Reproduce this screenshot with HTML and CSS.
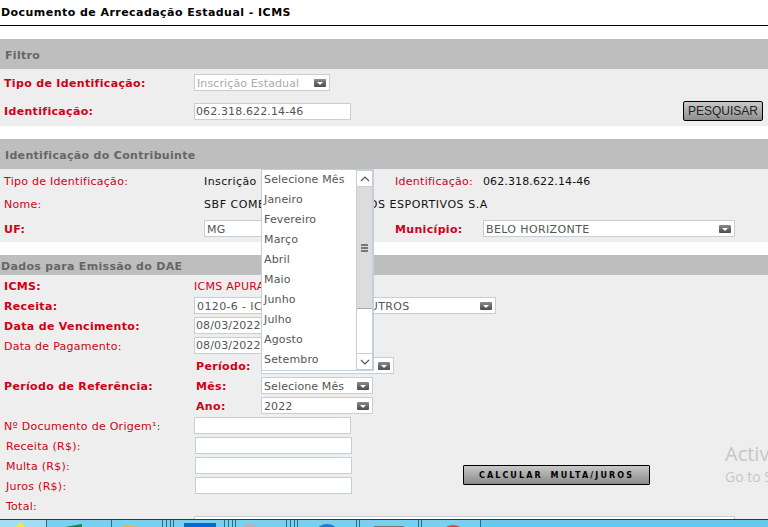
FILE: index.html
```html
<!DOCTYPE html>
<html lang="pt-BR">
<head>
  <meta charset="UTF-8" />
  <title>Documento de Arrecadação Estadual - ICMS</title>
  <link rel="stylesheet" href="styles.css">
</head>
<body>
  <div class="page">
    <h1 class="title">Documento de Arrecadação Estadual - ICMS</h1>

    <div class="section filtro">
      <h2 class="bar">Filtro</h2>
      <div class="panel">
        <div class="row row-tipo">
          <label class="lbl strong">Tipo de Identificação:</label>
          <div class="select select-off w136">Inscrição Estadual<span class="arrow"></span></div>
        </div>
        <div class="row row-id">
          <label class="lbl strong">Identificação:</label>
          <div class="input w157">062.318.622.14-46</div>
          <button class="btn-search">PESQUISAR</button>
        </div>
      </div>
    </div>

    <div class="section contrib">
      <h2 class="bar">Identificação do Contribuinte</h2>
      <div class="panel">
        <div class="row row-c1">
          <span class="lbl">Tipo de Identificação:</span>
          <span class="val col-val wide">Inscrição Estadual</span>
          <span class="lbl col-id">Identificação:</span>
          <span class="val">062.318.622.14-46</span>
        </div>
        <div class="row row-c2">
          <span class="lbl">Nome:</span>
          <span class="val col-val name">SBF COMERCIO DE PRODUTOS ESPORTIVOS S.A</span>
        </div>
        <div class="row row-c3">
          <span class="lbl strong">UF:</span>
          <div class="select upper w130 uf">MG<span class="arrow"></span></div>
          <span class="lbl strong col-mun">Município:</span>
          <div class="select upper w252">BELO HORIZONTE<span class="arrow"></span></div>
        </div>
      </div>
    </div>

    <div class="section dados">
      <h2 class="bar bar-short">Dados para Emissão do DAE</h2>
      <div class="panel panel-dados">
        <div class="line"><span class="lbl strong">ICMS:</span><span class="lbl">ICMS APURADO</span></div>
        <div class="line"><span class="lbl strong">Receita:</span><div class="select upper w302">0120-6 - ICMS COMERCIO E OUTROS<span class="arrow"></span></div></div>
        <div class="line"><span class="lbl strong">Data de Vencimento:</span><div class="input w157">08/03/2022</div></div>
        <div class="line"><span class="lbl">Data de Pagamento:</span><div class="input w157">08/03/2022</div></div>
        <div class="line line-ref"><span></span><span class="lbl strong">Período:</span><div class="select w133">Selecione<span class="arrow"></span></div></div>
        <div class="line line-ref"><span class="lbl strong">Período de Referência:</span><span class="lbl strong">Mês:</span><div class="select w112">Selecione Mês<span class="arrow"></span></div></div>
        <div class="line line-ref"><span></span><span class="lbl strong">Ano:</span><div class="select w112">2022<span class="arrow"></span></div></div>
        <div class="line"><span class="lbl">Nº Documento de Origem¹:</span><div class="input w157"></div></div>
        <div class="line line-money"><span class="lbl">Receita (R$):</span><div class="input w157"></div></div>
        <div class="line line-money"><span class="lbl">Multa (R$):</span><div class="input w157"></div><button class="btn-calc">CALCULAR MULTA/JUROS</button></div>
        <div class="line line-money"><span class="lbl">Juros (R$):</span><div class="input w157"></div></div>
        <div class="line line-money"><span class="lbl">Total:</span></div>
        <div class="line line-last"><span></span><div class="input w541"></div></div>
      </div>
    </div>

    <div class="taskbar">
      <div class="task w47 task-first"><span class="tip tip-star"></span></div>
      <div class="task w65"><span class="tip tip-green"></span></div>
      <div class="task w51"><span class="tip tip-gold"></span></div>
      <div class="task w4"></div><div class="task w4"></div><div class="task w3"></div>
      <div class="task w51"><span class="tip tip-blue"></span></div>
      <div class="task w4"></div><div class="task w4"></div><div class="task w3"></div>
      <div class="task w51"><span class="tip tip-gray"></span></div>
      <div class="task w4"></div><div class="task w4"></div><div class="task w3"></div>
      <div class="task w59"><span class="tip tip-round"></span></div>
      <div class="task w3"></div>
      <div class="task w59"><span class="tip tip-dark"></span></div>
      <div class="task w3"></div>
      <div class="task w59"><span class="tip tip-red"></span></div>
    </div>

    <ul class="month-list">
      <li>Selecione Mês</li>
      <li>Janeiro</li>
      <li>Fevereiro</li>
      <li>Março</li>
      <li>Abril</li>
      <li>Maio</li>
      <li>Junho</li>
      <li>Julho</li>
      <li>Agosto</li>
      <li>Setembro</li>
      <li class="scroll">
        <span class="scroll-btn"><svg width="10" height="6" viewBox="0 0 10 6"><path d="M1 5 5 1l4 4" fill="none" stroke="#555" stroke-width="1.2"/></svg></span>
        <span class="scroll-thumb"><i></i><i></i><i></i></span>
        <span class="scroll-btn scroll-down"><svg width="10" height="6" viewBox="0 0 10 6"><path d="M1 1l4 4 4-4" fill="none" stroke="#555" stroke-width="1.2"/></svg></span>
      </li>
    </ul>

    <div class="watermark">
      <div class="wm-big">Activate Windows</div>
      <div class="wm-small">Go to Settings to activate Windows.</div>
    </div>
  </div>
</body>
</html>
```

FILE: styles.css
```css
* {
  box-sizing: border-box;
}

html, body {
  margin: 0;
  padding: 0;
}

body {
  font-family: "DejaVu Sans", Verdana, sans-serif;
  font-size: 11px;
  background: #fff;
  color: #111;
}

.page {
  position: relative;
  width: 768px;
  height: 527px;
  overflow: hidden;
}

.title {
  margin: 0;
  height: 26px;
  padding: 6px 0 0 1px;
  font-size: 11px;
  line-height: 14px;
  font-weight: bold;
  letter-spacing: 0.45px;
  color: #000;
  border-bottom: 1px solid #000;
}

.section {
  margin-top: 13px;
}

.bar {
  margin: 0;
  height: 30px;
  padding: 2px 0 0 5px;
  background: #bebebe;
  color: #666;
  font-size: 11px;
  font-weight: bold;
  letter-spacing: 0.32px;
  line-height: 30px;
}

.bar-short {
  height: 20px;
  padding-left: 1px;
  line-height: 20px;
}

.panel {
  background: #eee;
}

.filtro .panel {
  height: 57px;
  padding-top: 5px;
}

.contrib .panel {
  height: 73px;
}

.dados .panel {
  height: 244px;
  padding-top: 1px;
}

.row {
  display: flex;
  align-items: center;
  padding-left: 4px;
}

.row .lbl:first-child {
  width: 190px;
  flex: none;
}

.row-tipo {
  height: 17px;
}

.row-tipo .lbl,
.row-c3 .lbl {
  padding-top: 2px;
}

.row-id {
  height: 20px;
  margin-top: 10px;
}

.row-c1 {
  height: 24px;
}

.row-c2 {
  height: 22px;
}

.row-c3 {
  height: 27px;
}

.row-c1 .lbl:first-child,
.row-c2 .lbl:first-child,
.row-c3 .lbl:first-child {
  width: 200px;
}

.lbl {
  color: #d00017;
  letter-spacing: 0.27px;
  white-space: nowrap;
}

.strong {
  font-weight: bold;
  letter-spacing: 0.33px;
}

.val {
  color: #111;
  letter-spacing: 0.12px;
  white-space: nowrap;
}

.wide {
  letter-spacing: 0.4px;
}

.name {
  letter-spacing: 0.56px;
}

.col-val {
  width: 191px;
  flex: none;
}

.col-mun,
.col-id {
  width: 88px;
}

.uf {
  margin-right: 61px;
}

.select,
.input {
  flex: none;
  position: relative;
  height: 17px;
  padding: 0 2px;
  background: #fff;
  border: 1px solid #c3cfda;
  color: #555;
  letter-spacing: 0.12px;
  line-height: 15px;
  white-space: nowrap;
}

.select {
  line-height: 17px;
}

.input {
  padding: 0 1px;
}

.upper {
  letter-spacing: 0.38px;
}

.select-off {
  color: #aaa;
}

.arrow {
  position: absolute;
  right: 3px;
  top: 4px;
  width: 12px;
  height: 8px;
  border-radius: 1px;
  background: linear-gradient(#8a8a8a, #4c4c4c);
}

.arrow::after {
  content: "";
  position: absolute;
  left: 3px;
  top: 3px;
  border: 3px solid transparent;
  border-top: 3px solid #fff;
  border-bottom: 0;
}

.w112 { width: 112px; }
.w130 { width: 130px; }
.w133 { width: 133px; }
.w136 { width: 136px; }
.w157 { width: 157px; }
.w252 { width: 252px; }
.w302 { width: 302px; }
.w541 { width: 541px; }

.btn-search {
  margin-left: auto;
  margin-right: 5px;
  width: 80px;
  height: 20px;
  padding: 0;
  border: 1px solid #000;
  border-radius: 2px;
  background: linear-gradient(#c9c9c9, #8e8e8e);
  color: #222;
  font-family: "Liberation Sans", Arial, sans-serif;
  font-size: 12px;
}

.line {
  display: grid;
  grid-template-columns: 190px auto 1fr;
  grid-template-rows: 20px;
  align-items: center;
  height: 20px;
  padding-left: 4px;
}

.line .select,
.line .input {
  margin-bottom: 1px;
}

.line-ref {
  grid-template-columns: 192px 65px auto 1fr;
}

.line-money {
  padding-left: 6px;
  grid-template-columns: 189px 268px auto;
}

.btn-calc {
  align-self: start;
  margin-top: 9px;
  width: 187px;
  height: 20px;
  padding: 0;
  border: 1px solid #000;
  border-radius: 1px;
  background: linear-gradient(#c8c8c8, #8a8a8a);
  color: #000;
  font-family: "DejaVu Sans", sans-serif;
  font-size: 8px;
  font-weight: bold;
  letter-spacing: 2.1px;
  word-spacing: 3px;
}

.line-last .input {
  margin-bottom: 3px;
}

.taskbar {
  position: absolute;
  left: 0;
  right: 0;
  bottom: 0;
  height: 8px;
  display: flex;
  background: #66c8ea;
  border-top: 1px solid #2a3a42;
}

.task {
  position: relative;
  flex: none;
  height: 7px;
  overflow: hidden;
  background: #78d0ee;
  border-right: 1px solid #2d6b84;
}

.task-first {
  background: #a3ddf3;
}

.w3 { width: 3px; }
.w4 { width: 4px; }
.w47 { width: 47px; }
.w51 { width: 51px; }
.w59 { width: 59px; }
.w65 { width: 65px; }

/* tops of the taskbar icons, cut off by the window edge */
.tip {
  position: absolute;
  display: block;
}

.tip-star {
  left: 16px;
  top: 3px;
  width: 9px;
  height: 4px;
  background: #f5e63b;
  clip-path: polygon(35% 0, 65% 0, 100% 100%, 0 100%);
}

.tip-green {
  left: 18px;
  top: 4px;
  width: 17px;
  height: 3px;
  background: #1f7f4f;
  clip-path: polygon(100% 0, 100% 100%, 0 100%);
}

.tip-gold {
  left: 11px;
  top: 6px;
  width: 14px;
  height: 1px;
  background: #d9b356;
}

.tip-blue {
  left: 10px;
  top: 3px;
  width: 32px;
  height: 4px;
  background: #0a66d8;
}

.tip-gray {
  left: 9px;
  top: 4px;
  width: 14px;
  height: 3px;
  background: #b5b5b5;
  clip-path: polygon(0 0, 40% 0, 100% 100%, 0 100%);
}

.tip-round {
  left: 19px;
  top: 4px;
  width: 20px;
  height: 14px;
  border-radius: 50%;
  background: #2a76c9;
}

.tip-dark {
  left: 14px;
  top: 6px;
  width: 30px;
  height: 1px;
  background: #777;
}

.tip-red {
  left: 21px;
  top: 5px;
  width: 20px;
  height: 14px;
  border-radius: 50%;
  background: #e8433a;
}

/* open month dropdown, drawn over the form */
.month-list {
  position: absolute;
  left: 261px;
  top: 169px;
  width: 113px;
  height: 202px;
  margin: 0;
  padding: 0;
  list-style: none;
  background: #fff;
  border: 1px solid #c3cfda;
  color: #555;
  letter-spacing: 0.15px;
}

.month-list li {
  height: 20px;
  padding-left: 2px;
  line-height: 19px;
}

.month-list .scroll {
  position: absolute;
  right: 0;
  top: 0;
  width: 17px;
  height: 200px;
  padding: 0;
  display: flex;
  flex-direction: column;
  justify-content: space-between;
  border: 1px solid #c3cfda;
  background: #fff;
}

.scroll-btn {
  height: 16px;
  display: flex;
  align-items: center;
  justify-content: center;
  border-bottom: 1px solid #c3cfda;
}

.scroll-down {
  border-top: 1px solid #c3cfda;
  border-bottom: 0;
}

.scroll-thumb {
  flex: 1;
  margin-bottom: 44px;
  display: flex;
  flex-direction: column;
  align-items: center;
  justify-content: center;
  gap: 1px;
  background: #dcdcdc;
  border-bottom: 1px solid #aaa;
}

.scroll-thumb i {
  width: 7px;
  height: 2px;
  background: #777;
}

.watermark {
  position: absolute;
  left: 725px;
  top: 441px;
  width: 300px;
  color: #c6c6c6;
  font-family: "Open Sans", sans-serif;
  white-space: nowrap;
}

.wm-big {
  font-size: 20px;
  line-height: 26px;
}

.wm-small {
  font-size: 14px;
  line-height: 19px;
}
```
